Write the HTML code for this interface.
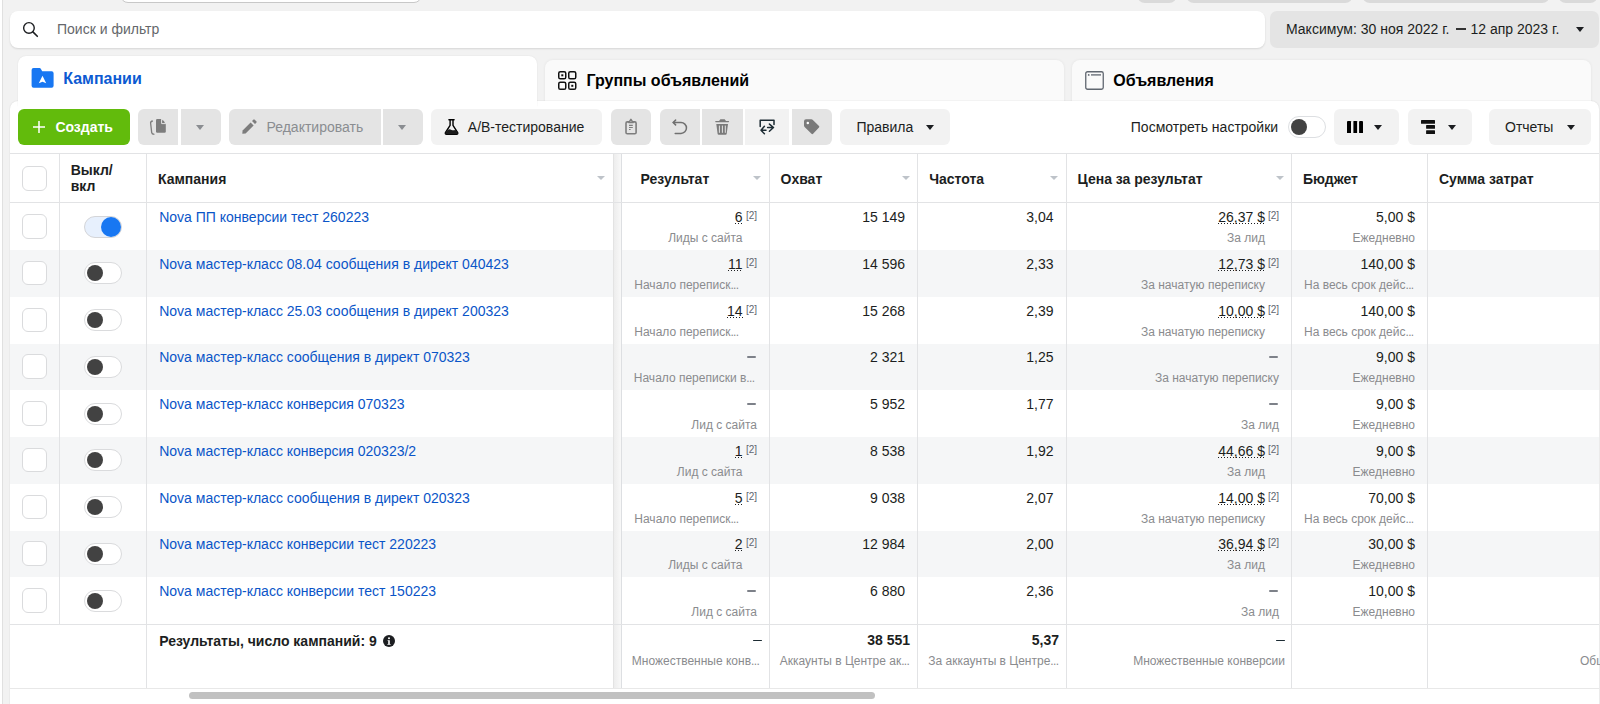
<!DOCTYPE html>
<html><head><meta charset="utf-8">
<style>
*{box-sizing:border-box;margin:0;padding:0}
html,body{width:1600px;height:704px;overflow:hidden;background:#f2f2f2;font-family:"Liberation Sans",sans-serif;color:#1c1e21;position:relative}
.a{position:absolute}
.t{position:absolute;white-space:nowrap;font-size:14px;line-height:16px}
.t.b{font-weight:bold}
.link{color:#0a55c8}
.sub{font-size:12px;color:#8a8b8e}
.el{letter-spacing:-0.65px}
.sup{font-size:10px;color:#606770}
.dot{background:linear-gradient(to right,#1c1e21 0 1px,transparent 1px) repeat-x 0 calc(100% - 1px)/3px 1px}
.dsh{position:absolute;width:9px;height:2px;background:#7d8189;border-radius:1px}
.dsh.s{width:9.4px;height:1.5px;background:#1c2b33}
.rowbg{position:absolute;left:10px;width:1589px;background:#f5f6f7}
.cb{position:absolute;left:22px;width:24.5px;height:24.5px;border:1px solid #dadbdd;border-radius:6px;background:#fff}
.tg{position:absolute;left:84px;width:38px;height:22px;border:1px solid #dadbdd;border-radius:11px;background:#fff}
.tg i{position:absolute;left:2px;top:2px;width:16px;height:16px;border-radius:50%;background:#424242}
.tg.on{background:#e7f0fd;border-color:#d4d5d8}
.tg.on i{left:16px;top:0px;width:20px;height:20px;background:#1877f2;top:0px}
.vl{position:absolute;width:1px;background:#e2e3e5}
.hl{position:absolute;height:1px;background:#e2e3e5}
.btn{position:absolute;top:109px;height:36px;background:#e4e4e4;border-radius:6px}
.btn.l{background:#f2f2f2}
.arr{position:absolute;width:0;height:0;border-left:4.8px solid transparent;border-right:4.8px solid transparent;border-top:5.6px solid #1c1e21}
.sarr{position:absolute;width:0;height:0;border-left:4px solid transparent;border-right:4px solid transparent;border-top:4.8px solid #bec3c9;top:175.9px}
</style></head><body>
<!-- left strip -->
<div class="a" style="left:0;top:0;width:2px;height:704px;background:#fff"></div>
<div class="a" style="left:2px;top:0;width:1px;height:704px;background:#e0e0e0"></div>
<!-- top cut-off elements -->
<div class="a" style="left:120px;top:-30px;width:302px;height:33px;background:#fff;border:1px solid #c8c8c8;border-radius:8px"></div>
<div class="a" style="left:1137px;top:-30px;width:40px;height:33px;background:#dadada;border-radius:8px"></div>
<div class="a" style="left:1186px;top:-30px;width:167px;height:33px;background:#dadada;border-radius:8px"></div>
<div class="a" style="left:1362px;top:-30px;width:188px;height:33px;background:#dadada;border-radius:8px"></div>
<div class="a" style="left:1558px;top:-30px;width:40px;height:33px;background:#dadada;border-radius:8px"></div>

<!-- search -->
<div class="a" style="left:10px;top:11px;width:1255px;height:37px;background:#fff;border-radius:8px;box-shadow:0 1px 2px rgba(0,0,0,0.12)"></div>
<svg class="a" style="left:16px;top:18px" width="28" height="24" viewBox="0 0 28 24"><circle cx="12.95" cy="9.9" r="5.3" fill="none" stroke="#1c1e21" stroke-width="1.4"/><path d="M16.9 13.9 L21.3 18.3" stroke="#1c1e21" stroke-width="1.6" stroke-linecap="round"/></svg>
<div class="t" style="left:57px;top:21.25px;color:#65676b">Поиск и фильтр</div>

<!-- date -->
<div class="a" style="left:1270px;top:11px;width:329px;height:36.5px;background:#e4e4e4;border-radius:7px"></div>
<div class="t" style="left:1286px;top:21.2px">Максимум: 30 ноя 2022 г.</div>
<div class="a" style="left:1456px;top:28.2px;width:9.8px;height:1.7px;background:#333"></div>
<div class="t" style="left:1470.5px;top:21.2px">12 апр 2023 г.</div>
<div class="arr" style="left:1576px;top:27px"></div>

<!-- tabs -->
<div class="a" style="left:544.5px;top:60px;width:519.5px;height:45px;background:#fafafa;border-radius:8px 8px 0 0;box-shadow:0 0 3px rgba(0,0,0,0.07), inset 0 -3px 3px -2px rgba(0,0,0,0.04)"></div>
<div class="a" style="left:1072px;top:60px;width:519px;height:45px;background:#fafafa;border-radius:8px 8px 0 0;box-shadow:0 0 3px rgba(0,0,0,0.07), inset 0 -3px 3px -2px rgba(0,0,0,0.04)"></div>
<!-- panel -->
<div class="a" style="left:10px;top:100.5px;width:1589px;height:620px;background:#fff;border-radius:8px 8px 0 0;box-shadow:0 0 1.5px rgba(0,0,0,0.14)"></div>
<div class="a" style="left:18px;top:56px;width:519px;height:50px;background:#fff;border-radius:8px 8px 0 0;box-shadow:0 0 1.5px rgba(0,0,0,0.1)"></div>
<div class="a" style="left:18px;top:100px;width:519px;height:10px;background:#fff"></div>

<!-- tab 1 content -->
<svg class="a" style="left:29px;top:65px" width="28" height="26" viewBox="0 0 28 26"><path d="M2.6 5 Q2.6 3 4.6 3 L10.6 3 Q11.3 3 11.8 3.8 L13.2 6.3 L22.6 6.3 Q24.6 6.3 24.6 8.3 L24.6 20.7 Q24.6 22.7 22.6 22.7 L4.6 22.7 Q2.6 22.7 2.6 20.7 Z" fill="#1877f2"/><path d="M13.5 10.8 L17.2 18.3 L13.5 16.8 L9.8 18.3 Z" fill="#fff"/></svg>
<div class="t b" style="left:63.2px;top:68.8px;font-size:16px;line-height:20px;color:#0c5ad2">Кампании</div>
<!-- tab 2 -->
<svg class="a" style="left:557px;top:70px" width="20" height="20" viewBox="0 0 20 20" fill="none" stroke="#111" stroke-width="1.5"><rect x="1.75" y="1.75" width="7" height="7" rx="1.6"/><rect x="11.75" y="1.75" width="7" height="7" rx="1.6"/><rect x="1.75" y="12.25" width="7" height="7" rx="1.6"/><rect x="11.75" y="12.25" width="7" height="7" rx="1.6"/><rect x="4.3" y="4.3" width="2" height="2" fill="#111" stroke="none"/><rect x="14.3" y="14.8" width="2" height="2" fill="#111" stroke="none"/></svg>
<div class="t b" style="left:586.5px;top:71.2px;font-size:16px;line-height:20px;color:#000">Группы объявлений</div>
<!-- tab 3 -->
<svg class="a" style="left:1085px;top:70.5px" width="19" height="19" viewBox="0 0 19 19" fill="none" stroke="#606770" stroke-width="1.3"><rect x="0.75" y="0.75" width="17.5" height="17.5" rx="1.8"/><circle cx="3.7" cy="3.9" r="0.9" fill="#606770" stroke="none"/><path d="M6 3.9 H16"/></svg>
<div class="t b" style="left:1113.3px;top:71.2px;font-size:16px;line-height:20px;color:#000">Объявления</div>

<!-- toolbar -->
<div class="btn" style="left:18px;width:112px;background:#62bb0c"></div>
<svg class="a" style="left:32px;top:120px" width="14" height="14" viewBox="0 0 14 14"><path d="M7 1 V13 M1 7 H13" stroke="#fff" stroke-width="1.5"/></svg>
<div class="t b" style="left:55.4px;top:119px;color:#fff">Создать</div>

<div class="btn" style="left:137.5px;width:40.5px;border-radius:6px 0 0 6px"></div>
<div class="btn" style="left:180.5px;width:40.5px;border-radius:0 6px 6px 0"></div>
<svg class="a" style="left:146px;top:115px" width="22" height="22" viewBox="0 0 22 22"><path d="M6.8 6 Q4.4 6.4 4.6 8 L5.7 17.6 Q5.9 19.2 8.4 19.4" fill="none" stroke="#7d7d7d" stroke-width="1.3"/><path d="M11.2 4.1 H15.3 L19.8 9.1 V16.5 Q19.8 17.7 18.6 17.7 H11.2 Q10 17.7 10 16.5 V5.3 Q10 4.1 11.2 4.1 Z" fill="#7d7d7d"/><path d="M15.6 4.1 V8.6 H19.8" fill="none" stroke="#e4e4e4" stroke-width="1"/><path d="M16.6 4.8 L19 7.6 H16.6 Z" fill="#7d7d7d"/></svg>
<div class="arr" style="left:196px;top:124.5px;border-top-color:#8a8d91"></div>

<div class="btn" style="left:229px;width:151.5px;border-radius:6px 0 0 6px"></div>
<div class="btn" style="left:382.5px;width:40.5px;border-radius:0 6px 6px 0"></div>
<svg class="a" style="left:238px;top:115px" width="22" height="22" viewBox="0 0 22 22"><path d="M4.3 18.7 L4.6 15.4 L12.6 7.4 L15.6 10.4 L7.6 18.4 Z" fill="#7d7d7d"/><path d="M14 6 L15.3 4.7 Q16 4 16.7 4.7 L18.3 6.3 Q19 7 18.3 7.7 L17 9 Z" fill="#7d7d7d"/></svg>
<div class="t" style="left:266.5px;top:118.5px;color:#8a8d91">Редактировать</div>
<div class="arr" style="left:398px;top:124.5px;border-top-color:#8a8d91"></div>

<div class="btn l" style="left:431px;width:171px"></div>
<svg class="a" style="left:440px;top:115px" width="22" height="22" viewBox="0 0 22 22"><path d="M9 4.7 H14" stroke="#000" stroke-width="1.6" stroke-linecap="round"/><path d="M10.1 4.7 V10.3 L5.4 17.6 Q5 19.2 6.5 19.2 H16.6 Q18.1 19.2 17.7 17.6 L13 10.3 V4.7" fill="none" stroke="#000" stroke-width="1.4" stroke-linejoin="round"/><path d="M7.6 14.9 Q9.5 13.8 11.5 14.9 Q13.5 15.9 15.4 14.7 L17.7 17.8 Q18.1 19.3 16.6 19.3 H6.5 Q5 19.3 5.4 17.8 Z" fill="#1c1c1c"/></svg>
<div class="t" style="left:467.8px;top:118.5px">A/B-тестирование</div>

<div class="btn" style="left:611px;width:39.5px"></div>
<svg class="a" style="left:620px;top:115px" width="22" height="22" viewBox="0 0 22 22" fill="none" stroke="#7d7d7d"><rect x="6" y="6.9" width="10.1" height="11.8" rx="1.3" stroke-width="1.6"/><path d="M8.8 7.6 L10.9 4.3 L13.1 7.6 Z" fill="#e4e4e4" stroke-width="1.5" stroke-linejoin="round"/><path d="M9 10.3 H12.8 M9 12.5 H12.8 M9 14.5 H10.6" stroke-width="1.2"/></svg>

<div class="btn" style="left:659.5px;width:40.5px;border-radius:6px 0 0 6px"></div>
<div class="btn" style="left:702px;width:40.5px;border-radius:0"></div>
<div class="btn l" style="left:745px;width:44px;border-radius:0"></div>
<div class="btn" style="left:791.5px;width:40px;border-radius:0 6px 6px 0"></div>
<svg class="a" style="left:668px;top:115px" width="22" height="22" viewBox="0 0 22 22" fill="none" stroke="#707070" stroke-width="1.5" stroke-linecap="round" stroke-linejoin="round"><path d="M5.2 7.5 H13 A5.45 5.45 0 0 1 13 18.4 H7.2"/><path d="M7.6 5.1 L5.2 7.5 L7.6 9.9"/></svg>
<svg class="a" style="left:711px;top:115px" width="22" height="22" viewBox="0 0 22 22"><path d="M8.1 6.1 L9.4 4.2 H13.7 L15 6.1 Z" fill="#7a7a7a"/><rect x="4.2" y="6" width="13.9" height="1.2" rx="0.6" fill="#7a7a7a"/><path d="M5.3 9 H17 L15.7 18.7 Q15.6 19.7 14.6 19.7 H7.7 Q6.7 19.7 6.6 18.7 Z" fill="#7a7a7a"/><path d="M8.4 10.6 V17.8 M11.4 10.6 V17.8 M14.3 10.6 V17.8" stroke="#e4e4e4" stroke-width="1"/></svg>
<svg class="a" style="left:756px;top:115px" width="22" height="22" viewBox="0 0 22 22" fill="none" stroke="#1c2b33" stroke-width="1.5" stroke-linecap="round" stroke-linejoin="round"><path d="M4.2 11.6 V5.3 H18 V9.4"/><path d="M8.4 11.3 L5 15.3 L8.4 18.7 M5 15.3 H10"/><path d="M13.4 9.1 L17.5 12.5 L13.4 16.2 M11.6 12.5 H17.5"/></svg>
<svg class="a" style="left:800px;top:115px" width="22" height="22" viewBox="0 0 22 22"><path d="M4 6.2 Q4 4.2 6 4.2 H11.4 Q12.1 4.2 12.6 4.7 L19 11.1 Q19.7 11.8 19 12.5 L13.1 18.8 Q12.3 19.6 11.5 18.8 L4.6 12 Q4 11.4 4 10.6 Z" fill="#7a7a7a"/><circle cx="7.8" cy="8.1" r="1.25" fill="#fff"/></svg>

<div class="btn l" style="left:840px;width:110px"></div>
<div class="t" style="left:856.4px;top:118.5px">Правила</div>
<div class="arr" style="left:926px;top:124.5px"></div>

<div class="t" style="left:1130.8px;top:118.5px">Посмотреть настройки</div>
<div class="a" style="left:1287.5px;top:115.5px;width:38.5px;height:22px;border:1px solid #dddfe2;border-radius:11px;background:#fff"></div>
<div class="a" style="left:1290.5px;top:118.5px;width:16.5px;height:16.5px;border-radius:50%;background:#424242"></div>

<div class="btn l" style="left:1334px;width:65px"></div>
<svg class="a" style="left:1346.5px;top:120.7px" width="16" height="12.2" viewBox="0 0 16 12.2" fill="#000"><rect x="0" y="0" width="4" height="12.2" rx="0.5"/><rect x="6.4" y="0" width="3.7" height="12.2" rx="0.5"/><rect x="12.1" y="0" width="3.9" height="12.2" rx="0.5"/></svg>
<div class="arr" style="left:1374px;top:124.5px"></div>

<div class="btn l" style="left:1408px;width:64px"></div>
<svg class="a" style="left:1421px;top:120px" width="14" height="14" viewBox="0 0 14 14" fill="#111"><rect x="0" y="0" width="14" height="3.7" rx="0.5"/><rect x="5.1" y="5.1" width="8.9" height="3.7" rx="0.5"/><rect x="5.1" y="10.3" width="8.9" height="3.7" rx="0.5"/></svg>
<div class="arr" style="left:1447.5px;top:124.5px"></div>

<div class="btn l" style="left:1489px;width:102px"></div>
<div class="t" style="left:1505px;top:118.5px">Отчеты</div>
<div class="arr" style="left:1566.5px;top:124.5px"></div>

<!-- table -->
<div class="rowbg" style="top:250.05px;height:46.75px"></div>
<div class="rowbg" style="top:343.55px;height:46.75px"></div>
<div class="rowbg" style="top:437.05px;height:46.75px"></div>
<div class="rowbg" style="top:530.55px;height:46.75px"></div>
<div class="cb" style="top:214.00px"></div>
<div class="tg on" style="top:215.50px"><i></i></div>
<div class="t link" style="left:159.2px;top:209.0px;">Nova ПП конверсии тест 260223</div>
<div class="t " style="right:857.5px;top:209.0px;"><span class="dot">6</span></div>
<div class="t sup" style="right:843px;top:208.0px;">[2]</div>
<div class="t sub" style="right:857.5px;top:230.10000000000002px;">Лиды с сайта</div>
<div class="t " style="right:695px;top:209.0px;">15 149</div>
<div class="t " style="right:546.5px;top:209.0px;">3,04</div>
<div class="t " style="right:335px;top:209.0px;"><span class="dot">26,37 $</span></div>
<div class="t sup" style="right:321px;top:208.0px;">[2]</div>
<div class="t sub" style="right:335px;top:230.10000000000002px;">За лид</div>
<div class="t " style="right:185px;top:209.0px;">5,00 $</div>
<div class="t sub" style="right:185px;top:230.10000000000002px;">Ежедневно</div>
<div class="cb" style="top:260.75px"></div>
<div class="tg" style="top:262.25px"><i></i></div>
<div class="t link" style="left:159.2px;top:255.75px;">Nova мастер-класс 08.04 сообщения в директ 040423</div>
<div class="t " style="right:857.5px;top:255.75px;"><span class="dot">11</span></div>
<div class="t sup" style="right:843px;top:254.75px;">[2]</div>
<div class="t sub" style="left:634.3px;top:276.85px;">Начало переписк<span class="el">...</span></div>
<div class="t " style="right:695px;top:255.75px;">14 596</div>
<div class="t " style="right:546.5px;top:255.75px;">2,33</div>
<div class="t " style="right:335px;top:255.75px;"><span class="dot">12,73 $</span></div>
<div class="t sup" style="right:321px;top:254.75px;">[2]</div>
<div class="t sub" style="right:335px;top:276.85px;">За начатую переписку</div>
<div class="t " style="right:185px;top:255.75px;">140,00 $</div>
<div class="t sub" style="left:1304px;top:276.85px;">На весь срок дейс<span class="el">...</span></div>
<div class="cb" style="top:307.50px"></div>
<div class="tg" style="top:309.00px"><i></i></div>
<div class="t link" style="left:159.2px;top:302.5px;">Nova мастер-класс 25.03 сообщения в директ 200323</div>
<div class="t " style="right:857.5px;top:302.5px;"><span class="dot">14</span></div>
<div class="t sup" style="right:843px;top:301.5px;">[2]</div>
<div class="t sub" style="left:634.3px;top:323.6px;">Начало переписк<span class="el">...</span></div>
<div class="t " style="right:695px;top:302.5px;">15 268</div>
<div class="t " style="right:546.5px;top:302.5px;">2,39</div>
<div class="t " style="right:335px;top:302.5px;"><span class="dot">10,00 $</span></div>
<div class="t sup" style="right:321px;top:301.5px;">[2]</div>
<div class="t sub" style="right:335px;top:323.6px;">За начатую переписку</div>
<div class="t " style="right:185px;top:302.5px;">140,00 $</div>
<div class="t sub" style="left:1304px;top:323.6px;">На весь срок дейс<span class="el">...</span></div>
<div class="cb" style="top:354.25px"></div>
<div class="tg" style="top:355.75px"><i></i></div>
<div class="t link" style="left:159.2px;top:349.25px;">Nova мастер-класс сообщения в директ 070323</div>
<div class="dsh" style="left:747px;top:356px"></div>
<div class="t sub" style="left:633.8px;top:370.35px;">Начало переписки в<span class="el">...</span></div>
<div class="t " style="right:695px;top:349.25px;">2 321</div>
<div class="t " style="right:546.5px;top:349.25px;">1,25</div>
<div class="dsh" style="left:1269px;top:356px"></div>
<div class="t sub" style="right:321px;top:370.35px;">За начатую переписку</div>
<div class="t " style="right:185px;top:349.25px;">9,00 $</div>
<div class="t sub" style="right:185px;top:370.35px;">Ежедневно</div>
<div class="cb" style="top:401.00px"></div>
<div class="tg" style="top:402.50px"><i></i></div>
<div class="t link" style="left:159.2px;top:396.0px;">Nova мастер-класс конверсия 070323</div>
<div class="dsh" style="left:747px;top:403px"></div>
<div class="t sub" style="right:843px;top:417.1px;">Лид с сайта</div>
<div class="t " style="right:695px;top:396.0px;">5 952</div>
<div class="t " style="right:546.5px;top:396.0px;">1,77</div>
<div class="dsh" style="left:1269px;top:403px"></div>
<div class="t sub" style="right:321px;top:417.1px;">За лид</div>
<div class="t " style="right:185px;top:396.0px;">9,00 $</div>
<div class="t sub" style="right:185px;top:417.1px;">Ежедневно</div>
<div class="cb" style="top:447.75px"></div>
<div class="tg" style="top:449.25px"><i></i></div>
<div class="t link" style="left:159.2px;top:442.75px;">Nova мастер-класс конверсия 020323/2</div>
<div class="t " style="right:857.5px;top:442.75px;"><span class="dot">1</span></div>
<div class="t sup" style="right:843px;top:441.75px;">[2]</div>
<div class="t sub" style="right:857.5px;top:463.85px;">Лид с сайта</div>
<div class="t " style="right:695px;top:442.75px;">8 538</div>
<div class="t " style="right:546.5px;top:442.75px;">1,92</div>
<div class="t " style="right:335px;top:442.75px;"><span class="dot">44,66 $</span></div>
<div class="t sup" style="right:321px;top:441.75px;">[2]</div>
<div class="t sub" style="right:335px;top:463.85px;">За лид</div>
<div class="t " style="right:185px;top:442.75px;">9,00 $</div>
<div class="t sub" style="right:185px;top:463.85px;">Ежедневно</div>
<div class="cb" style="top:494.50px"></div>
<div class="tg" style="top:496.00px"><i></i></div>
<div class="t link" style="left:159.2px;top:489.5px;">Nova мастер-класс сообщения в директ 020323</div>
<div class="t " style="right:857.5px;top:489.5px;"><span class="dot">5</span></div>
<div class="t sup" style="right:843px;top:488.5px;">[2]</div>
<div class="t sub" style="left:634.3px;top:510.6px;">Начало переписк<span class="el">...</span></div>
<div class="t " style="right:695px;top:489.5px;">9 038</div>
<div class="t " style="right:546.5px;top:489.5px;">2,07</div>
<div class="t " style="right:335px;top:489.5px;"><span class="dot">14,00 $</span></div>
<div class="t sup" style="right:321px;top:488.5px;">[2]</div>
<div class="t sub" style="right:335px;top:510.6px;">За начатую переписку</div>
<div class="t " style="right:185px;top:489.5px;">70,00 $</div>
<div class="t sub" style="left:1304px;top:510.6px;">На весь срок дейс<span class="el">...</span></div>
<div class="cb" style="top:541.25px"></div>
<div class="tg" style="top:542.75px"><i></i></div>
<div class="t link" style="left:159.2px;top:536.25px;">Nova мастер-класс конверсии тест 220223</div>
<div class="t " style="right:857.5px;top:536.25px;"><span class="dot">2</span></div>
<div class="t sup" style="right:843px;top:535.25px;">[2]</div>
<div class="t sub" style="right:857.5px;top:557.3499999999999px;">Лиды с сайта</div>
<div class="t " style="right:695px;top:536.25px;">12 984</div>
<div class="t " style="right:546.5px;top:536.25px;">2,00</div>
<div class="t " style="right:335px;top:536.25px;"><span class="dot">36,94 $</span></div>
<div class="t sup" style="right:321px;top:535.25px;">[2]</div>
<div class="t sub" style="right:335px;top:557.3499999999999px;">За лид</div>
<div class="t " style="right:185px;top:536.25px;">30,00 $</div>
<div class="t sub" style="right:185px;top:557.3499999999999px;">Ежедневно</div>
<div class="cb" style="top:588.00px"></div>
<div class="tg" style="top:589.50px"><i></i></div>
<div class="t link" style="left:159.2px;top:583.0px;">Nova мастер-класс конверсии тест 150223</div>
<div class="dsh" style="left:747px;top:590px"></div>
<div class="t sub" style="right:843px;top:604.0999999999999px;">Лид с сайта</div>
<div class="t " style="right:695px;top:583.0px;">6 880</div>
<div class="t " style="right:546.5px;top:583.0px;">2,36</div>
<div class="dsh" style="left:1269px;top:590px"></div>
<div class="t sub" style="right:321px;top:604.0999999999999px;">За лид</div>
<div class="t " style="right:185px;top:583.0px;">10,00 $</div>
<div class="t sub" style="right:185px;top:604.0999999999999px;">Ежедневно</div>
<div class="a" style="left:613px;top:153px;width:9px;height:535px;background:linear-gradient(to right,#e3e3e3 0,#e3e3e3 1px,#ededed 1px,#f8f8f8 8px,#dddfe2 8px)"></div>
<div class="hl" style="left:10px;top:153px;width:1589px"></div>
<div class="hl" style="left:10px;top:202px;width:1589px"></div>
<div class="hl" style="left:10px;top:624px;width:1589px"></div>
<div class="hl" style="left:10px;top:688px;width:1589px;background:#e8e8e8"></div>
<div class="vl" style="left:59px;top:153px;height:471.5px"></div>
<div class="vl" style="left:146px;top:153px;height:535px"></div>
<div class="vl" style="left:769px;top:153px;height:535px"></div>
<div class="vl" style="left:917px;top:153px;height:535px"></div>
<div class="vl" style="left:1066px;top:153px;height:535px"></div>
<div class="vl" style="left:1291px;top:153px;height:535px"></div>
<div class="vl" style="left:1427px;top:153px;height:535px"></div>


<!-- header -->
<div class="cb" style="top:166px"></div>
<div class="t b" style="left:70.7px;top:162px">Выкл/</div>
<div class="t b" style="left:70.7px;top:178px">вкл</div>
<div class="t b" style="left:158px;top:170.5px">Кампания</div>
<div class="sarr" style="left:597px"></div>
<div class="t b" style="left:640.5px;top:170.5px">Результат</div>
<div class="sarr" style="left:753px"></div>
<div class="t b" style="left:780.5px;top:170.5px">Охват</div>
<div class="sarr" style="left:901.5px"></div>
<div class="t b" style="left:929.2px;top:170.5px">Частота</div>
<div class="sarr" style="left:1050px"></div>
<div class="t b" style="left:1077.5px;top:170.5px">Цена за результат</div>
<div class="sarr" style="left:1275.5px"></div>
<div class="t b" style="left:1303px;top:170.5px">Бюджет</div>
<div class="t b" style="left:1439px;top:170.5px">Сумма затрат</div>

<div class="t b" style="left:159.2px;top:632.5px;">Результаты, число кампаний: 9</div>
<div class="dsh s" style="left:753px;top:639.7px"></div>
<div class="t sub" style="left:631.8px;top:653.3px;">Множественные конв<span class="el">...</span></div>
<div class="t b" style="right:690px;top:632.3px;">38 551</div>
<div class="t sub" style="left:779.8px;top:653.3px;">Аккаунты в Центре ак<span class="el">...</span></div>
<div class="t b" style="right:541px;top:632.3px;">5,37</div>
<div class="t sub" style="left:928.3px;top:653.3px;">За аккаунты в Центре<span class="el">...</span></div>
<div class="dsh s" style="left:1275.5px;top:639.7px"></div>
<div class="t sub" style="right:315px;top:653.3px;">Множественные конверсии</div>
<div class="t sub" style="left:1580px;top:653.3px;">Общие</div>
<svg class="a" style="left:382.5px;top:635px" width="12" height="12" viewBox="0 0 12 12"><circle cx="6" cy="6" r="6" fill="#1c1e21"/><circle cx="6" cy="3.2" r="1" fill="#fff"/><path d="M4.6 5.2 H6.8 V9 H7.6 V9.8 H4.4 V9 H5.2 V6 H4.6 Z" fill="#fff"/></svg>
<div class="a" style="left:189px;top:692px;width:686px;height:7px;border-radius:4px;background:#c1c1c1"></div>
</body></html>
